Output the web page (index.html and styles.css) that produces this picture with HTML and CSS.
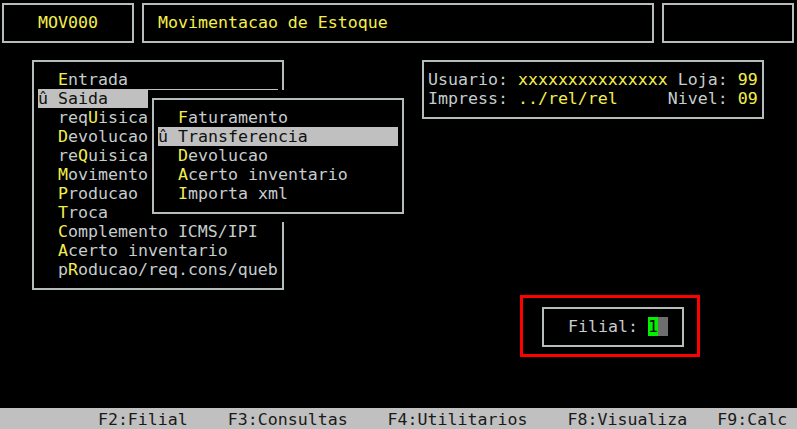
FILE: index.html
```html
<!DOCTYPE html>
<html lang="pt">
<head>
    <meta charset="UTF-8">
    <meta name="viewport" content="width=device-width, initial-scale=1.0">
    <title>Movimentacao de Estoque</title>
    <link rel="stylesheet" href="styles.css">
</head>
<body>
    <div class="screen">
        <div class="win code"><div class="line val">   MOV000</div></div>
        <div class="win title"><div class="line val"> Movimentacao de Estoque</div></div>
        <div class="win blank"></div>

        <div class="win menu">
            <div class="line">  <span class="hot">E</span>ntrada</div>
            <div class="line sel">û Saida</div>
            <div class="line">  req<span class="hot">U</span>isica</div>
            <div class="line">  <span class="hot">D</span>evolucao</div>
            <div class="line">  re<span class="hot">Q</span>uisica</div>
            <div class="line">  <span class="hot">M</span>ovimento</div>
            <div class="line">  <span class="hot">P</span>roducao</div>
            <div class="line">  <span class="hot">T</span>roca</div>
            <div class="line">  <span class="hot">C</span>omplemento ICMS/IPI</div>
            <div class="line">  <span class="hot">A</span>certo inventario</div>
            <div class="line">  p<span class="hot">R</span>oducao/req.cons/queb</div>
        </div>

        <div class="win sub">
            <div class="line">  <span class="hot">F</span>aturamento</div>
            <div class="line sel">û Transferencia</div>
            <div class="line">  <span class="hot">D</span>evolucao</div>
            <div class="line">  <span class="hot">A</span>certo inventario</div>
            <div class="line">  <span class="hot">I</span>mporta xml</div>
        </div>

        <div class="win info">
            <div class="line">Usuario: <span class="val">xxxxxxxxxxxxxxx</span> Loja: <span class="val">99</span></div>
            <div class="line">Impress: <span class="val">../rel/rel</span>     Nivel: <span class="val">09</span></div>
        </div>

        <div class="win filial">
            <div class="line">  Filial: <span class="field">1</span><span class="cursor"> </span></div>
        </div>

        <div class="mark"></div>

        <div class="status">          F2:Filial    F3:Consultas    F4:Utilitarios    F8:Visualiza   F9:Calc</div>
    </div>
</body>
</html>
```

FILE: styles.css
```css
body {
    margin: 0;
    background-color: #000;
}
.screen {
    position: relative;
    width: 797px;
    height: 429px;
    overflow: hidden;
    display: flex;
    flex-direction: column;
    justify-content: flex-end;
    font-family: "DejaVu Sans Mono", monospace;
    font-size: 16.6px;
    line-height: 19px;
    color: #c5cdcd;
}
.win {
    position: absolute;
    box-sizing: border-box;
    border: 2px solid #b4bcbc;
    padding: 8px 4px;
    background-color: #000;
}
.line {
    height: 19px;
    white-space: pre;
}
.hot,
.val {
    color: #f4ee4c;
}
.sel {
    background-color: #c0c0c0;
    color: #111;
}
.code {
    left: 2px;
    top: 3px;
    width: 132px;
    height: 40px;
}
.title {
    left: 142px;
    top: 3px;
    width: 512px;
    height: 40px;
}
.blank {
    left: 662px;
    top: 3px;
    width: 132px;
    height: 40px;
}
.menu {
    left: 32px;
    top: 60px;
    width: 252px;
    height: 230px;
}
.sub {
    left: 152px;
    top: 98px;
    width: 252px;
    height: 116px;
    box-shadow: 0 -4px 0 4px #000, 0 4px 0 4px #000;
}
.info {
    left: 422px;
    top: 60px;
    width: 342px;
    height: 59px;
}
.filial {
    left: 542px;
    top: 307px;
    width: 142px;
    height: 40px;
}
.field {
    background-color: #00f000;
    color: #000;
}
.cursor {
    background-color: #6e6e6e;
}
.mark {
    position: absolute;
    left: 520px;
    top: 295px;
    width: 180px;
    height: 62px;
    box-sizing: border-box;
    border: 3px solid #f00;
}
.status {
    height: 21px;
    box-sizing: border-box;
    padding-top: 3px;
    line-height: 18px;
    background-color: #c0c0c0;
    color: #1a1a1a;
    white-space: pre;
    text-indent: -2px;
}
```
